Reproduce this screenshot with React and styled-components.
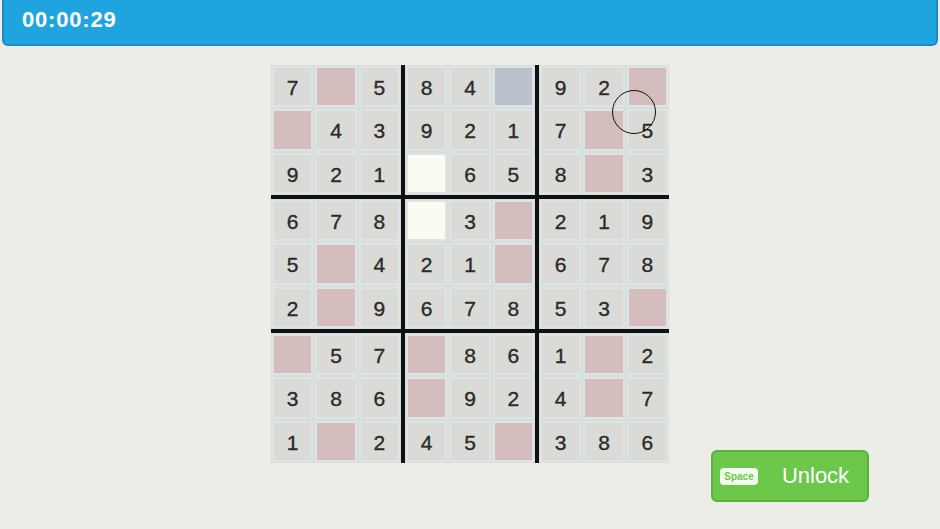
import React from "react";
import styled, { createGlobalStyle } from "styled-components";

const GlobalStyle = createGlobalStyle`
  body {
    margin: 0;
    background: #ededE7;
    font-family: "Liberation Sans", Arial, sans-serif;
  }
`;

const Header = styled.header`
  height: 44px;
  margin: 0 2px;
  background: #1fa4df;
  border: 2px solid #1a8cc3;
  border-top: none;
  border-radius: 0 0 6px 6px;
  display: flex;
  align-items: center;
  padding-left: 18px;
  box-sizing: content-box;
`;

const Timer = styled.div`
  color: #fff;
  font-weight: bold;
  font-size: 22px;
  letter-spacing: 0.8px;
  margin-top: -4px;
`;

const Main = styled.main`
  display: grid;
  grid-template-columns: 1fr 398px 1fr;
  grid-template-rows: 437px;
  padding-top: 19px;
`;

const BoardWrap = styled.div`
  grid-column: 2;
  position: relative;
  width: 398px;
  height: 398px;
`;

const Board = styled.div`
  display: grid;
  grid-template-columns: repeat(3, 130px);
  grid-template-rows: repeat(3, 130px);
  gap: 4px;
  background: #111;
  width: 398px;
  height: 398px;
`;

const Block = styled.div`
  display: grid;
  grid-template-columns: repeat(3, 1fr);
  grid-template-rows: repeat(3, 1fr);
  background: #dde4e2;
`;

const fills = {
  n: "#dadad6",
  p: "#d5bcbd",
  b: "#b9c1cc",
  w: "#fbfbf2",
};

const Cell = styled.div`
  padding: 2px;
  display: flex;
  border: 1px solid #d6dfdf;
`;

const Tile = styled.div`
  flex: 1;
  background: ${(p) => fills[p.$kind]};
  display: flex;
  align-items: center;
  justify-content: center;
  color: #2a2a2a;
  font-size: 21px;
  padding-top: 3px;
  -webkit-text-stroke: 0.35px #2a2a2a;
`;

const Cursor = styled.div`
  position: absolute;
  left: 341px;
  top: 25px;
  width: 42px;
  height: 42px;
  border: 1.6px solid #111;
  border-radius: 50%;
  pointer-events: none;
`;

const Side = styled.div`
  grid-column: 3;
  align-self: end;
  padding-left: 42px;
`;

const UnlockButton = styled.button`
  width: 158px;
  height: 52px;
  background: #6bc84b;
  border: 2px solid #5cb23e;
  border-radius: 6px;
  display: flex;
  align-items: center;
  padding: 0 0 0 7px;
  box-sizing: border-box;
  cursor: pointer;
  font-family: "Liberation Sans", Arial, sans-serif;
`;

const Key = styled.span`
  background: #f3fbef;
  color: #6bc84b;
  font-size: 10px;
  font-weight: bold;
  border-radius: 4px;
  width: 38px;
  height: 17px;
  display: flex;
  align-items: center;
  justify-content: center;
`;

const Label = styled.span`
  flex: 1;
  color: #fff;
  font-size: 22px;
  text-align: center;
  margin-left: 6px;
`;

const rows = [
  "7p5 84b 92p",
  "p43 921 7p5",
  "921 w65 8p3",
  "678 w3p 219",
  "5p4 21p 678",
  "2p9 678 53p",
  "p57 p86 1p2",
  "386 p92 4p7",
  "1p2 45p 386",
];

const grid = rows.map((r) => r.replace(/ /g, "").split(""));

function blockCells(br, bc) {
  const out = [];
  for (let r = 0; r < 3; r++) {
    for (let c = 0; c < 3; c++) {
      out.push(grid[br * 3 + r][bc * 3 + c]);
    }
  }
  return out;
}

export default function App() {
  return (
    <>
      <GlobalStyle />
      <Header>
        <Timer>00:00:29</Timer>
      </Header>
      <Main>
        <BoardWrap>
          <Board>
            {[0, 1, 2].map((br) =>
              [0, 1, 2].map((bc) => (
                <Block key={`${br}-${bc}`}>
                  {blockCells(br, bc).map((v, i) => {
                    const isNum = /\d/.test(v);
                    return (
                      <Cell key={i}>
                        <Tile $kind={isNum ? "n" : v}>{isNum ? v : ""}</Tile>
                      </Cell>
                    );
                  })}
                </Block>
              ))
            )}
          </Board>
          <Cursor />
        </BoardWrap>
        <Side>
          <UnlockButton>
            <Key>Space</Key>
            <Label>Unlock</Label>
          </UnlockButton>
        </Side>
      </Main>
    </>
  );
}
